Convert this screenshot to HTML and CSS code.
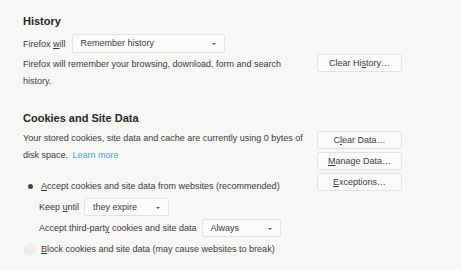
FILE: index.html
```html
<!DOCTYPE html>
<html lang="en">
<head>
    <meta charset="UTF-8">
    <title>Privacy Preferences</title>
    <link rel="stylesheet" href="styles.css">
</head>
<body>
    <div class="prefs">
        <section class="group">
            <h2>History</h2>
            <div class="line first">
                <span class="label">Firefox <u>w</u>ill</span>
                <div class="dropdown history-select">Remember history<span class="arrow"></span></div>
            </div>
            <div class="split">
                <p class="desc">Firefox will remember your browsing, download, form and search history.</p>
                <div class="actions">
                    <button class="btn">Clear Hi<u>s</u>tory…</button>
                </div>
            </div>
        </section>

        <section class="group">
            <h2>Cookies and Site Data</h2>
            <div class="split">
                <div class="left">
                    <p class="desc">
                        <span>Your stored cookies, site data and cache are currently using 0 bytes of</span>
                        <span>disk space.</span>
                        <a href="#" class="link">Learn more</a>
                    </p>
                    <div class="radio-row">
                        <span class="radio checked"></span>
                        <span><u>A</u>ccept cookies and site data from websites (recommended)</span>
                    </div>
                    <div class="line sub">
                        <span class="label">Keep <u>u</u>ntil</span>
                        <div class="dropdown expire-select">they expire<span class="arrow"></span></div>
                    </div>
                    <div class="line sub">
                        <span class="label">Accept third-part<u>y</u> cookies and site data</span>
                        <div class="dropdown always-select">Always<span class="arrow"></span></div>
                    </div>
                    <div class="radio-row">
                        <span class="radio"></span>
                        <span><u>B</u>lock cookies and site data (may cause websites to break)</span>
                    </div>
                </div>
                <div class="actions stack">
                    <button class="btn">C<u>l</u>ear Data…</button>
                    <button class="btn"><u>M</u>anage Data…</button>
                    <button class="btn"><u>E</u>xceptions…</button>
                </div>
            </div>
        </section>
    </div>
</body>
</html>
```

FILE: styles.css
```css
:root {
    --bg: #f7f7f6;
    --text: #3a3a3a;
    --border: #e2e2e2;
    --link: #4f9be8;
}

* {
    margin: 0;
    padding: 0;
    box-sizing: border-box;
}

body {
    font-family: "Liberation Sans", Arial, sans-serif;
    font-size: 9px;
    background: var(--bg);
    color: var(--text);
    width: 461px;
    height: 270px;
    overflow: hidden;
}

.prefs {
    padding: 15px 0 0 23px;
}

.group {
    margin-bottom: 22px;
}

.group h2 {
    font-size: 11px;
    font-weight: bold;
    color: #262626;
    margin-bottom: 7px;
}

u {
    text-decoration: underline;
}

.line {
    display: flex;
    align-items: center;
    gap: 6px;
    height: 19px;
}

.line.first {
    margin-top: 1px;
}

.line.sub {
    height: 21px;
    gap: 5px;
    margin-left: 16px;
}

.split {
    display: flex;
    justify-content: space-between;
    width: 379px;
}

.desc {
    width: 285px;
    line-height: 17px;
    margin-top: 3px;
}

.left .desc {
    margin-top: -1px;
    margin-bottom: 11px;
}

.link {
    color: var(--link);
    text-decoration: none;
    margin-left: 2px;
}

.dropdown {
    position: relative;
    height: 19px;
    line-height: 17px;
    padding: 0 8px;
    border: 1px solid var(--border);
    border-radius: 2px;
    background: #fbfbfb;
}

.sub .dropdown {
    height: 18px;
    line-height: 16px;
}

.arrow {
    position: absolute;
    right: 8px;
    top: 8px;
    border-left: 2px solid transparent;
    border-right: 2px solid transparent;
    border-top: 2px solid #555;
}

.history-select { width: 153px; }
.expire-select { width: 85px; }
.always-select { width: 79px; }

.actions {
    display: flex;
    flex-direction: column;
    gap: 3px;
    padding-top: 1px;
}

.stack {
    padding-top: 0;
}

.btn {
    width: 85px;
    height: 18px;
    font-family: inherit;
    font-size: 9px;
    color: var(--text);
    background: #fafafa;
    border: 1px solid var(--border);
    border-radius: 2px;
}

.radio-row {
    display: flex;
    align-items: center;
    gap: 5px;
    height: 21px;
    margin-left: 1px;
}

.radio {
    width: 12px;
    height: 12px;
    border-radius: 50%;
    border: 1px solid #e6e6e6;
    background: #eeeeee;
    position: relative;
}

.radio.checked {
    background: transparent;
    border-color: transparent;
}

.radio.checked::after {
    content: "";
    position: absolute;
    left: 3px;
    top: 3px;
    width: 5px;
    height: 5px;
    border-radius: 50%;
    background: #444;
}
```
